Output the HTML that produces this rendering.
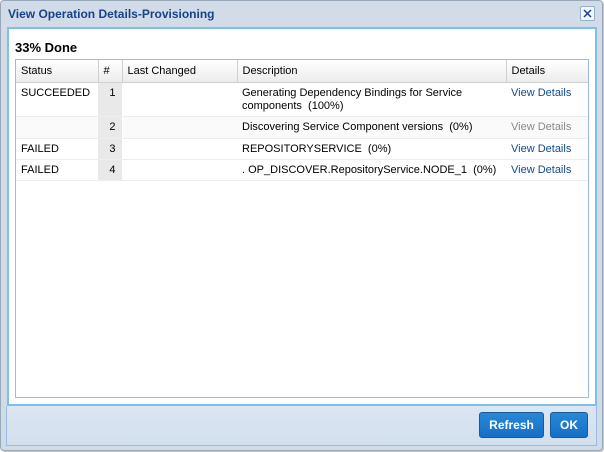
<!DOCTYPE html>
<html><head><style>
*{margin:0;padding:0;box-sizing:border-box}
body{width:604px;height:452px;background:#fff;font-family:"Liberation Sans",Arial,sans-serif;font-size:11px;color:#000;position:relative;overflow:hidden}
.win{position:absolute;left:0;top:0;width:603px;height:451px;border:1px solid #99a8b8;border-radius:4px;background:linear-gradient(#d2dce8,#d0dbe8);box-shadow:1px 1px 1px #bbb}
.title{position:absolute;left:8px;top:7px;font-weight:bold;font-size:12px;color:#15428b}
.close{position:absolute;left:580px;top:6px;width:15px;height:15px;border:1px solid #8fb0d0;background:#f4f8fc;border-radius:2px}
.body{position:absolute;left:7px;top:27px;width:590px;height:379px;border:2px solid #7ec1e8;background:#fff}
.done{position:absolute;left:15px;top:40px;font-weight:bold;font-size:13px}
.grid{position:absolute;left:15px;top:59px;width:574px;height:339px;border:1px solid #99bbe8;background:#fff}
.foot{position:absolute;left:6px;top:406px;width:591px;height:40px;border:1px solid #99bbe8;border-top:none;background:linear-gradient(#dce6f2,#d2dfee)}
table{border-collapse:collapse;width:572px;table-layout:fixed}
th{height:22px;font-weight:normal;text-align:left;padding-left:5px;background:linear-gradient(#fff,#ececec);border-right:1px solid #d0d0d0;border-bottom:1px solid #d0d0d0}
td{vertical-align:top;padding:4px 5px 0;border-bottom:1px solid #ededed;line-height:13px}
td.n{background:#e9e9e9;text-align:right;padding-right:6px;border-right:1px solid #fff}
a{color:#15498b;text-decoration:none}
.g{color:#888}
.btn{position:absolute;top:412px;height:26px;border:1px solid #1a5a98;border-radius:3px;background:linear-gradient(#2a88d6,#1470c6);color:#fff;font-weight:bold;font-size:12px;text-align:center;line-height:24px}
</style></head><body>
<div class="win"></div>
<div class="title">View Operation Details-Provisioning</div>
<div class="close"><svg width="13" height="13"><path d="M3 3L10 10M10 3L3 10" stroke="#15428b" stroke-width="1.5"/></svg></div>
<div class="body"></div>
<div class="done">33% Done</div>
<div class="grid"><table>
<colgroup><col style="width:82px"><col style="width:24px"><col style="width:115px"><col style="width:269px"><col style="width:82px"></colgroup>
<tr><th>Status</th><th>#</th><th>Last Changed</th><th>Description</th><th style="border-right:none">Details</th></tr>
<tr style="height:34px"><td>SUCCEEDED</td><td class="n">1</td><td></td><td>Generating Dependency Bindings for Service components&nbsp; (100%)</td><td><a>View Details</a></td></tr>
<tr style="height:22px;background:#fafafa"><td></td><td class="n">2</td><td></td><td>Discovering Service Component versions&nbsp; (0%)</td><td class="g">View Details</td></tr>
<tr style="height:21px"><td>FAILED</td><td class="n">3</td><td></td><td>REPOSITORYSERVICE&nbsp; (0%)</td><td><a>View Details</a></td></tr>
<tr style="height:21px"><td>FAILED</td><td class="n">4</td><td></td><td>. OP_DISCOVER.RepositoryService.NODE_1&nbsp; (0%)</td><td><a>View Details</a></td></tr>
</table></div>
<div class="foot"></div>
<div class="btn" style="left:479px;width:65px">Refresh</div>
<div class="btn" style="left:550px;width:38px">OK</div>
</body></html>
